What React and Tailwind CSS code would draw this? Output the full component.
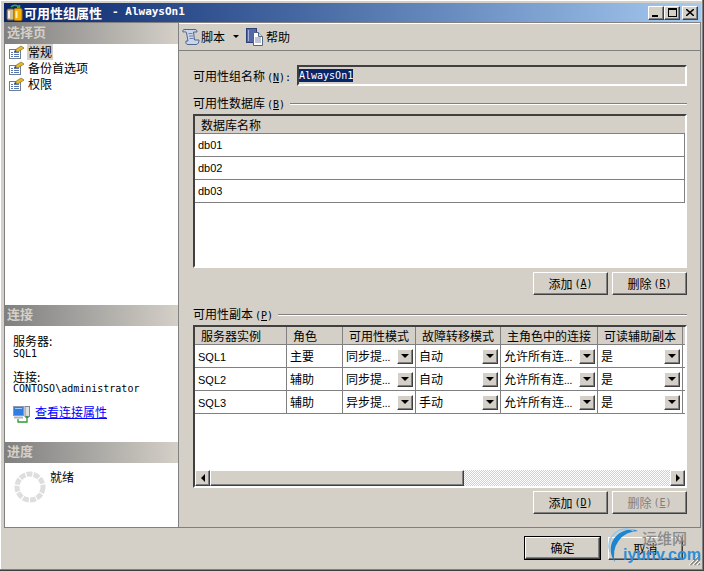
// Latin text in the dialog's bitmap font is half the CJK width
const Mono = ({ children, className = '' }) => (
  <span className={`font-['DejaVu_Sans_Mono',monospace] text-[10px] ${className}`}>{children}</span>
);

const Hot = ({ k }) => (
  <Mono className="ml-[2px]">(<u>{k}</u>)</Mono>
);

const bevel = 'border border-t-white border-l-white border-r-[#404040] border-b-[#404040] shadow-[inset_-1px_-1px_0_#808080] bg-[#d4d0c8]';

const PageIcon = () => (
  <svg width="17" height="15" viewBox="0 0 17 15" className="shrink-0">
    <rect x="1.5" y="4.5" width="11" height="9" fill="#fff" stroke="#6f7f95" />
    <path d="M3 7.5h2M6 7.5h5M3 9.5h2M6 9.5h5M3 11.5h2M6 11.5h5" stroke="#5a78b0" />
    <path d="M7 5l6-4 3 2-6 4z" fill="#e8b830" stroke="#7a6a20" strokeWidth="0.7" />
    <path d="M7 5l-1 2 3 0z" fill="#444" />
  </svg>
);

const ScriptIcon = () => (
  <svg width="18" height="18" viewBox="0 0 18 18" className="shrink-0">
    <path d="M2 1.500h11c1.500 0 2 1 2 2.500h-3.500l1 8H17c0 2.500-1 4.500-3 4.500H6c-2 0-2.500-2-2-3.500H6L4.500 5C4 3 3 4 1 4c-.5-1 0-2.500 1-2.500z" fill="#c9d5ea" stroke="#4f6590" />
    <path d="M6.500 5.500h4M7 8h4M7.500 10.500h4" stroke="#6b80ac" />
  </svg>
);

const HelpIcon = () => (
  <svg width="17" height="18" viewBox="0 0 17 18" className="shrink-0">
    <rect x="0.500" y="0.500" width="10" height="14" fill="#5468a8" stroke="#2f3f78" />
    <path d="M2.500 2v11" stroke="#a3b2da" />
    <path d="M7.500 4.500h5l4 4v9h-9z" fill="#fff" stroke="#55657f" />
    <path d="M9 10h6M9 12h6M9 14h6" stroke="#7d8ba5" />
    <path d="M12.500 4.500v4h4" fill="#d6dbe6" stroke="#55657f" />
  </svg>
);

const AppIcon = () => (
  <svg width="17" height="17" viewBox="0 0 17 17" className="shrink-0">
    <path d="M5 3C7 .5 11 .5 13 3M11 3.500h2.500V1" fill="none" stroke="#37a845" strokeWidth="1.500" />
    <rect x="1" y="5" width="7" height="11" rx="1.500" fill="#cfc09a" stroke="#6b5f45" />
    <path d="M3 7v7" stroke="#fff" strokeWidth="1.500" />
    <rect x="8" y="4.500" width="8" height="12" rx="1.500" fill="#f5b000" stroke="#a87408" />
    <path d="M10.500 7v7" stroke="#fff2b8" strokeWidth="2" />
  </svg>
);

const ConnIcon = () => (
  <svg width="17" height="17" viewBox="0 0 17 17" className="shrink-0">
    <rect x="0.500" y="0.500" width="10" height="9" fill="#2f7de0" stroke="#8a98b0" />
    <path d="M2 2.500h7" stroke="#9cc8f5" />
    <rect x="12" y="0.500" width="4.500" height="10" fill="#e3e0d6" stroke="#7a889f" />
    <rect x="1" y="10.500" width="9" height="2" fill="#a9b2c0" />
    <path d="M5 13v3h9v-5" fill="none" stroke="#2c9a2c" strokeWidth="1.300" />
    <path d="M12 12l2-2.500 2 2.500z" fill="#2c9a2c" />
  </svg>
);

const Spinner = () => (
  <svg width="32" height="32" viewBox="0 0 32 32" className="shrink-0">
    <circle cx="16" cy="16" r="13" fill="none" stroke="#dedede" strokeWidth="5" strokeDasharray="6 1.170" />
  </svg>
);

const SideHead = ({ children }) => (
  <div className="h-[21px] shrink-0 flex items-center pl-[2px] pb-[3px] bg-gradient-to-r from-[#808080] to-[#d4d0c8] text-[#d4d0c8] font-bold text-[13px] leading-[18px]">
    {children}
  </div>
);

const Button = ({ children, disabled, primary }) => (
  <button
    className={`w-[75px] ${primary ? 'h-[22px]' : 'h-[23px]'} flex items-center justify-center text-[12px] ${bevel} ${disabled ? 'text-[#808080]' : 'text-black'} ${primary ? 'outline outline-1 outline-black' : ''}`}
  >
    {children}
  </button>
);

const GroupLabel = ({ label, k }) => (
  <div className="flex items-center h-[14px] text-[12px] leading-[14px]">
    <span className="whitespace-nowrap">{label}<Hot k={k} /></span>
    <div className="flex-1 ml-[5px] border-t border-t-[#808080] border-b border-b-white" />
  </div>
);

const Combo = () => (
  <div className={`w-[16px] h-[15px] shrink-0 flex items-center justify-center ${bevel}`}>
    <div className="w-0 h-0 border-x-[4px] border-x-transparent border-t-[4px] border-t-black" />
  </div>
);

const Latin = ({ children }) => (
  <span className="font-['Liberation_Sans',sans-serif] text-[11px]">{children}</span>
);

const dbs = ['db01', 'db02', 'db03'];

const columns = [
  { name: '服务器实例', width: 'w-[92px]' },
  { name: '角色', width: 'w-[56px]' },
  { name: '可用性模式', width: 'w-[73px]' },
  { name: '故障转移模式', width: 'w-[85px]' },
  { name: '主角色中的连接', width: 'w-[97px]' },
  { name: '可读辅助副本', width: 'w-[85px]' },
];

const replicas = [
  { server: 'SQL1', role: '主要', mode: '同步提', failover: '自动' },
  { server: 'SQL2', role: '辅助', mode: '同步提', failover: '自动' },
  { server: 'SQL3', role: '辅助', mode: '异步提', failover: '手动' },
];

const tableFrame = 'bg-white border-2 border-t-[#404040] border-l-[#404040] border-r-white border-b-white';

const Cell = ({ width, combo, children }) => (
  <div className={`${width} h-full shrink-0 flex items-center pl-[3px] pr-[2px] border-r border-r-[#808080] text-[12px] whitespace-nowrap overflow-hidden`}>
    <div className="flex-1 min-w-0">{children}</div>
    {combo && <Combo />}
  </div>
);

export default function App() {
  return (
    <div className={`w-[704px] h-[571px] bg-[#d4d0c8] pt-[3px] pl-[4px] pr-[3px] flex flex-col overflow-hidden relative text-black font-['Noto_Sans_CJK_SC',sans-serif] shadow-[inset_-1px_-1px_0_#404040,inset_-2px_-2px_0_#808080,inset_1px_1px_0_#fff]`}>
      <div className="h-[19px] shrink-0 flex items-center pl-[2px] pr-[3px] bg-gradient-to-r from-[#0a246a] to-[#a6caf0] text-white">
        <AppIcon />
        <span className="ml-[1px] font-bold text-[13px] leading-[17px]">可用性组属性</span>
        <Mono className="font-bold text-[11px] ml-[10px]">- AlwaysOn1</Mono>
        <div className="ml-auto flex">
          <div className={`w-[16px] h-[14px] flex items-end justify-start pl-[3px] pb-[2px] ${bevel}`}>
            <div className="w-[6px] h-[2px] bg-black" />
          </div>
          <div className={`w-[16px] h-[14px] flex items-center justify-center ${bevel}`}>
            <div className="w-[9px] h-[9px] border border-black border-t-2" />
          </div>
          <div className={`ml-[2px] w-[16px] h-[14px] flex items-center justify-center ${bevel}`}>
            <svg width="8" height="7" viewBox="0 0 8 7"><path d="M0 0l8 7M8 0L0 7" stroke="#000" strokeWidth="1.500" /></svg>
          </div>
        </div>
      </div>

      <div className="h-[506px] shrink-0 flex border border-[#808080]">
        <div className="w-[173px] shrink-0 bg-white flex flex-col text-[12px]">
          <div className="h-[282px] shrink-0">
            <SideHead>选择页</SideHead>
            <div className="pl-[3px]">
              <div className="h-[16px] flex items-center leading-[16px]"><PageIcon /><span className="ml-[2px] bg-[#d4d0c8] px-[1px]">常规</span></div>
              <div className="h-[16px] flex items-center leading-[16px]"><PageIcon /><span className="ml-[2px] px-[1px]">备份首选项</span></div>
              <div className="h-[16px] flex items-center leading-[16px]"><PageIcon /><span className="ml-[2px] px-[1px]">权限</span></div>
            </div>
          </div>
          <div className="h-[137px] shrink-0">
            <SideHead>连接</SideHead>
            <div className="pl-[8px] pt-[9px] leading-[12px]">
              <div className="h-[13px]">服务器:</div>
              <Mono className="block h-[11px] leading-[11px]">SQL1</Mono>
              <div className="h-[13px] mt-[12px]">连接:</div>
              <Mono className="block h-[10px] leading-[10px]">CONTOSO\administrator</Mono>
              <div className="mt-[12px] flex items-start">
                <ConnIcon />
                <a href="#" className="ml-[5px] text-[#0000ff] underline leading-[11px]">查看连接属性</a>
              </div>
            </div>
          </div>
          <div className="flex-1">
            <SideHead>进度</SideHead>
            <div className="flex pl-[9px] pt-[8px]">
              <Spinner />
              <span className="ml-[4px] leading-[12px]">就绪</span>
            </div>
          </div>
        </div>

        <div className="flex-1 min-w-0 border-l border-l-[#808080]">
          <div className="h-[28px] border-b border-b-[#808080] flex items-center pl-[3px] text-[12px] shadow-[inset_0_1px_0_#fff]">
            <ScriptIcon />
            <span className="ml-[1px]">脚本</span>
            <div className="ml-[8px] w-0 h-0 border-x-[3px] border-x-transparent border-t-[3px] border-t-black" />
            <div className="ml-[7px]"><HelpIcon /></div>
            <span className="ml-[3px]">帮助</span>
          </div>

          <div className="pt-[14px] pl-[14px] pr-[13px]">
            <div className="flex items-center h-[21px] text-[12px]">
              <div className="w-[104px] shrink-0 whitespace-nowrap">可用性组名称<Hot k="N" /><Mono>:</Mono></div>
              <div className="flex-1 h-[21px] flex items-center border-2 border-t-[#404040] border-l-[#404040] border-r-white border-b-white">
                <Mono className="bg-[#0a246a] text-white leading-[13px]">AlwaysOn1</Mono>
              </div>
            </div>

            <div className="mt-[11px]"><GroupLabel label="可用性数据库" k="B" /></div>
            <div className={`mt-[3px] h-[154px] ${tableFrame}`}>
              <div className="h-[18px] flex items-center pl-[6px] bg-[#d4d0c8] border-b border-b-[#808080] text-[12px]">数据库名称</div>
              {dbs.map((db) => (
                <div key={db} className="h-[23px] flex items-center pl-[3px] border-b border-r border-[#808080]">
                  <Latin>{db}</Latin>
                </div>
              ))}
            </div>
            <div className="mt-[4px] flex justify-end gap-[4px]">
              <Button>添加<Hot k="A" /></Button>
              <Button>删除<Hot k="R" /></Button>
            </div>

            <div className="mt-[13px]"><GroupLabel label="可用性副本" k="P" /></div>
            <div className={`mt-[3px] h-[163px] flex flex-col ${tableFrame}`}>
              <div className="h-[18px] shrink-0 flex bg-[#d4d0c8] border-b border-b-[#808080] text-[12px]">
                {columns.map((col) => (
                  <div key={col.name} className={`${col.width} pl-[6px] shrink-0 flex items-center whitespace-nowrap border-r border-r-[#808080]`}>{col.name}</div>
                ))}
              </div>
              {replicas.map((r) => (
                <div key={r.server} className="h-[23px] shrink-0 flex border-b border-b-[#808080]">
                  <Cell width="w-[92px]"><Latin>{r.server}</Latin></Cell>
                  <Cell width="w-[56px]">{r.role}</Cell>
                  <Cell width="w-[73px]" combo>{r.mode}<span className="text-[10px]">...</span></Cell>
                  <Cell width="w-[85px]" combo>{r.failover}</Cell>
                  <Cell width="w-[97px]" combo>允许所有连<span className="text-[10px]">...</span></Cell>
                  <Cell width="w-[85px]" combo>是</Cell>
                </div>
              ))}
              <div className="flex-1" />
              <div className="h-[16px] shrink-0 flex">
                <div className={`w-[15px] h-[16px] flex items-center justify-center ${bevel}`}>
                  <div className="w-0 h-0 border-y-[4px] border-y-transparent border-r-[4px] border-r-black" />
                </div>
                <div className={`w-[254px] h-[16px] ${bevel}`} />
                <div className="flex-1 bg-[repeating-conic-gradient(#d4d0c8_0_25%,#ffffff_0_50%)] bg-[length:2px_2px]" />
                <div className={`w-[15px] h-[16px] flex items-center justify-center ${bevel}`}>
                  <div className="w-0 h-0 border-y-[4px] border-y-transparent border-l-[4px] border-l-black" />
                </div>
              </div>
            </div>
            <div className="mt-[3px] flex justify-end gap-[4px]">
              <Button>添加<Hot k="D" /></Button>
              <Button disabled>删除<Hot k="E" /></Button>
            </div>
          </div>
        </div>
      </div>

      <div className="flex justify-end items-start gap-[8px] pt-[9px] pr-[18px]">
        <Button primary>确定</Button>
        <Button>取消</Button>
      </div>

      {/* resize grip */}
      <svg width="13" height="13" viewBox="0 0 13 13" className="absolute left-[688px] top-[553px]">
        <path d="M12 1L1 12M12 5L5 12M12 9L9 12" stroke="#fff" strokeWidth="1" />
        <path d="M12 2.500L2.500 12M12 6.500L6.500 12M12 10.500L10.500 12" stroke="#808080" strokeWidth="1.200" />
      </svg>

      {/* site watermark over the bottom right corner */}
      <div className="absolute left-[600px] top-[522px] w-[104px] h-[49px]">
        <svg width="46" height="46" viewBox="0 0 46 46" className="absolute left-0 top-0">
          <path d="M38 9A20 20 0 0 0 15 40A24 24 0 0 1 38 9z" fill="#1c86d1" />
          <path d="M34 9A17 17 0 0 0 10 30" fill="none" stroke="#8cc6ec" strokeWidth="1.300" />
        </svg>
        <span className="absolute left-[42px] top-[7px] text-[15px] leading-[18px] font-medium text-[#8a8a8a] whitespace-nowrap">运维网</span>
        <span className="absolute left-[23px] top-[24px] text-[16px] leading-[18px] font-bold font-['Liberation_Sans',sans-serif] text-[#2d8fd8] whitespace-nowrap">iyunv.com</span>
      </div>
    </div>
  );
}
